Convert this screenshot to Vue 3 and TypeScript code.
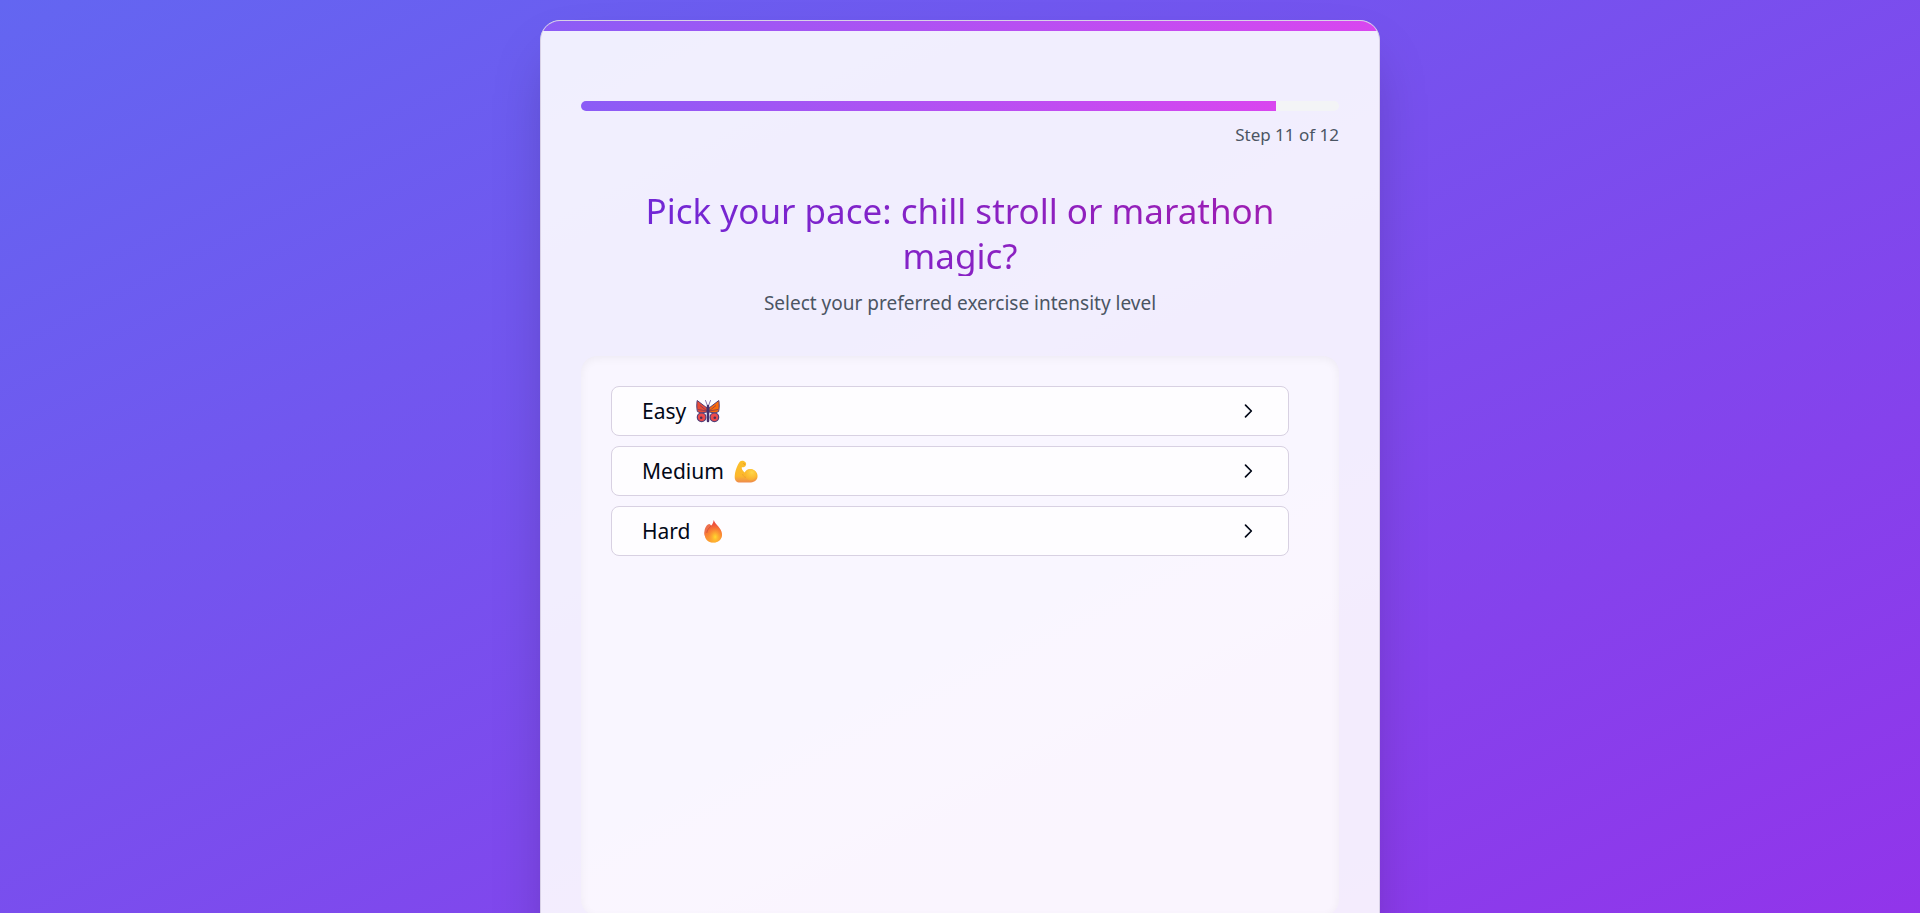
<script setup lang="ts">
import { computed, ref } from 'vue'

interface Choice {
  id: 'easy' | 'medium' | 'hard'
  label: string
}

const step = ref(11)
const total = 12
const progress = computed(() => `${((step.value / total) * 100).toFixed(2)}%`)

const choices: Choice[] = [
  { id: 'easy', label: 'Easy' },
  { id: 'medium', label: 'Medium' },
  { id: 'hard', label: 'Hard' },
]
</script>

<template>
  <div class="page">
    <div class="backdrop">
      <main class="card">
        <div class="accent"></div>
        <div class="content">
          <div class="track" role="progressbar" aria-labelledby="step-label" :aria-valuenow="step" aria-valuemin="0" :aria-valuemax="total">
            <div class="fill" :style="{ width: progress }"></div>
          </div>
          <p id="step-label" class="step">Step {{ step }} of {{ total }}</p>
          <header class="intro">
            <h1 class="title">Pick your pace: chill stroll or marathon magic?</h1>
            <p class="subtitle">Select your preferred exercise intensity level</p>
          </header>
          <section class="panel">
            <button v-for="choice in choices" :key="choice.id" type="button" class="choice">
              <span class="label">{{ choice.label }}</span>
              <svg v-if="choice.id === 'easy'" class="emoji" viewBox="0 0 24 24" aria-hidden="true">
                <path d="M11.600 7 9.500 1.500M12.400 7 14.500 1.500" fill="none" stroke="#68559b" stroke-width=".8" stroke-linecap="round" />
                <path d="M11 9 1.200 1.500C.6 5 .6 9 1.400 12.600L5 14 11 13Z" fill="#e84a36" stroke="#533f78" stroke-width="1" stroke-linejoin="round" />
                <path d="M13 9 22.800 1.500c.6 3.500.6 7.500-.2 11.100L19 14 13 13Z" fill="#fb6a08" stroke="#533f78" stroke-width="1" stroke-linejoin="round" />
                <path d="M11 12 4 6.500M11 12 2 10.500M13 12 20 6.500M13 12 22 10.500" stroke="#803c58" stroke-width=".8" />
                <circle cx="5.600" cy="18.300" r="4.300" fill="#ee4b4b" stroke="#533f78" stroke-width="1.200" />
                <circle cx="18.400" cy="18.300" r="4.300" fill="#ee4b4b" stroke="#533f78" stroke-width="1.200" />
                <circle cx="5.200" cy="18.800" r="1.300" fill="#4c3158" />
                <circle cx="18.800" cy="18.800" r="1.300" fill="#4c3158" />
                <path d="M12 7V22" stroke="#46326f" stroke-width="2.500" stroke-linecap="round" />
              </svg>
              <svg v-else-if="choice.id === 'medium'" class="emoji" viewBox="0 0 24 24" aria-hidden="true">
                <defs>
                  <linearGradient id="arm" x1="0" y1="0" x2="0" y2="1">
                    <stop offset="0" stop-color="#fbc02b" />
                    <stop offset=".7" stop-color="#fcb82c" />
                    <stop offset="1" stop-color="#ee8b4d" />
                  </linearGradient>
                  <radialGradient id="bicep" cx=".6" cy=".3" r=".7">
                    <stop offset="0" stop-color="#ffd84a" />
                    <stop offset="1" stop-color="#fbb32b" stop-opacity=".6" />
                  </radialGradient>
                </defs>
                <path d="M6 2.500C7.500 1.300 10.500 1.800 11.700 3.600c1 1.700.3 3.800-1.500 4.300-1 .3-2 0-2.400.4-.4 1.400.8 3.400 2.700 5.200C12.500 10.300 15.500 9.500 18.500 10.400 22 11.500 24 14.600 23.500 18c-.6 4-4 5.500-8 5.500H6C2.500 23.500.6 21.500.7 18 .8 12.500 3 6.500 6 2.500Z" fill="url(#arm)" />
                <circle cx="16.700" cy="15.700" r="5.700" fill="url(#bicep)" />
                <path d="M9.300 4.500c1.200-.3 1.600.8.800 1.500" fill="none" stroke="#e58f27" stroke-width=".8" />
                <path d="M8.500 15c.8 2 1.800 3 3.500 3.500" fill="none" stroke="#eda02d" stroke-width=".9" />
              </svg>
              <svg v-else class="emoji" viewBox="0 0 24 24" aria-hidden="true">
                <defs>
                  <linearGradient id="flame" x1=".5" y1="0" x2=".5" y2="1">
                    <stop offset="0" stop-color="#e9403e" />
                    <stop offset=".5" stop-color="#f77137" />
                    <stop offset="1" stop-color="#fca733" />
                  </linearGradient>
                  <radialGradient id="glow" cx=".6" cy=".75" r=".55">
                    <stop offset="0" stop-color="#ffdc2e" />
                    <stop offset="1" stop-color="#ff842f" stop-opacity="0" />
                  </radialGradient>
                </defs>
                <path d="M3.500 12C4 8.500 5.500 5.500 8.500 5L11 7 10 20.500C4 20 2.500 16 3.500 12Z" fill="#ed704d" />
                <path d="M12.800 1c1.200 4.500 7.700 7.500 8.200 13.900.4 5.300-3.600 8.700-8.700 8.700S3.300 20 4 15.200c.5-4.500 8-7.500 8.800-14.200Z" fill="url(#flame)" />
                <path d="M12.800 1c1.200 4.500 7.700 7.500 8.200 13.900.4 5.300-3.600 8.700-8.700 8.700S3.300 20 4 15.200c.5-4.500 8-7.500 8.800-14.200Z" fill="url(#glow)" />
                <path d="M5.800 14c.2-3 2-4.700 4-7" fill="none" stroke="#cf5038" stroke-width=".8" />
              </svg>
              <svg class="chevron" viewBox="0 0 24 24" aria-hidden="true">
                <path d="m9 19 7-7-7-7" fill="none" stroke="currentColor" stroke-width="2" stroke-linecap="round" stroke-linejoin="round" />
              </svg>
            </button>
          </section>
        </div>
      </main>
    </div>
  </div>
</template>

<style scoped>
.page {
  height: 100vh;
  overflow-y: auto;
  scrollbar-width: none;
  font-family: "Segoe UI", "Noto Sans", "Open Sans", sans-serif;
  color: #020817;
}
.backdrop {
  box-sizing: border-box;
  min-height: 100%;
  padding: 20px;
  background: linear-gradient(to bottom right, #6366f1, #9333ea);
}
.card {
  box-sizing: border-box;
  max-width: 840px;
  margin: 0 auto;
  overflow: hidden;
  border: 1px solid #d8d1e6;
  border-radius: 20px;
  background: rgb(255 255 255 / 90%);
  box-shadow: 0 30px 60px -15px rgb(0 0 0 / 25%);
}
.accent {
  height: 10px;
  background: linear-gradient(to right, #8b5cf6, #d946ef);
}
.content {
  padding: 70px 40px 40px;
}
.track {
  height: 10px;
  overflow: hidden;
  border-radius: 5px;
  background: #f3f4f6;
}
.fill {
  height: 100%;
  background: linear-gradient(to right, #8b5cf6, #d946ef);
}
.step {
  margin: 10px 0 0;
  font-size: 17px;
  line-height: 27px;
  text-align: right;
  color: #4b5563;
}
.intro {
  margin: 40px 0 38px;
  text-align: center;
}
.title {
  margin: 0;
  padding: 0 30px;
  font-size: 35px;
  font-weight: 400;
  line-height: 45px;
  color: transparent;
  background: linear-gradient(to right, #6d28d9, #a21caf) no-repeat;
  background-size: 100% calc(100% - 2px);
  background-clip: text;
}
.subtitle {
  margin: 10px 0 0;
  font-size: 19px;
  line-height: 30px;
  color: #4b5563;
}
.panel {
  display: flex;
  flex-direction: column;
  gap: 10px;
  box-sizing: border-box;
  min-height: 560px;
  padding: 30px 50px 30px 30px;
  border-radius: 16px;
  background: rgb(254 251 255 / 64%);
  box-shadow: inset 0 2px 10px rgb(0 0 0 / 5%);
}
.choice {
  display: flex;
  align-items: center;
  gap: 10px;
  height: 50px;
  padding: 0 30px;
  border: 1px solid #d8d1e2;
  border-radius: 8px;
  background: rgb(255 255 255 / 80%);
  font: inherit;
  font-size: 21px;
  color: inherit;
  cursor: pointer;
}
.emoji {
  width: 24px;
  height: 24px;
}
.chevron {
  width: 20px;
  height: 20px;
  margin-left: auto;
}
</style>

<style>
body {
  margin: 0;
}
</style>
